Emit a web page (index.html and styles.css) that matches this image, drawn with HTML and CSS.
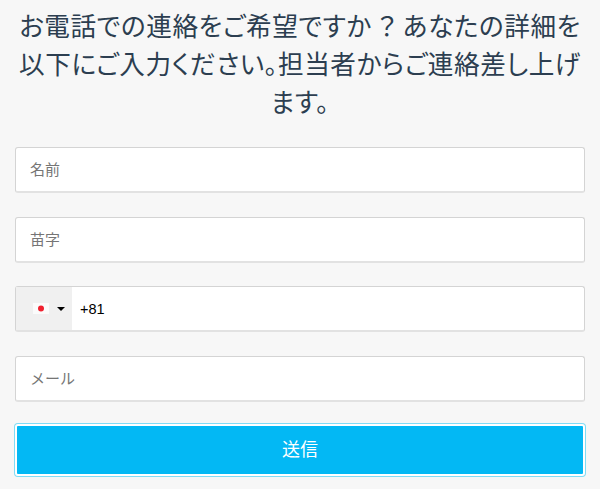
FILE: index.html
```html
<!doctype html>
<html lang="ja">
  <head>
    <meta charset="UTF-8" />
    <meta name="viewport" content="width=device-width, initial-scale=1.0" />
    <title>お電話での連絡</title>
    <link rel="stylesheet" href="styles.css">
  </head>
  <body>
    <main class="contact">
      <h2 class="title">お電話での連絡をご希望ですか<span class="question">？</span>あなたの詳細を<br>以下にご入力ください。担当者からご連絡差し上げます。</h2>

      <form class="form">
        <input class="field" type="text" placeholder="名前">
        <input class="field" type="text" placeholder="苗字">

        <div class="field phone">
          <div class="country">
            <svg class="flag" width="16" height="11" viewBox="0 0 16 11">
              <rect width="16" height="11" fill="#fbfbfb" />
              <circle cx="8" cy="5.5" r="3" fill="#f0212f" />
            </svg>
            <span class="caret"></span>
          </div>
          <input class="phone-input" type="tel" value="+81">
        </div>

        <input class="field" type="email" placeholder="メール">

        <button class="submit" type="button">送信</button>
      </form>
    </main>
  </body>
</html>
```

FILE: styles.css
```css
* {
  box-sizing: border-box;
}

body {
  margin: 0;
  height: 489px;
  overflow: hidden;
  background-color: #f7f7f7;
  font-family: "Liberation Sans", "Noto Sans CJK JP", sans-serif;
}

.contact {
  padding: 8px 15px 0;
}

.title {
  margin: 0 0 25px;
  font-size: 25.6px;
  font-feature-settings: "palt";
  letter-spacing: 0.6px;
  font-weight: 400;
  line-height: 38px;
  text-align: center;
  color: #2c3e50;
}

.question {
  padding: 0 6px;
}

.form {
  display: flex;
  flex-direction: column;
  gap: 23.5px;
}

.field {
  display: block;
  width: 100%;
  height: 46px;
  padding: 0 14px;
  background-color: #fff;
  border: 1px solid #d4d4d4;
  border-bottom: 2px solid #e2e2e2;
  border-radius: 3px;
  font-family: inherit;
  font-size: 15px;
  color: #000;
}

.field::placeholder {
  color: #757575;
  opacity: 1;
}

.phone {
  display: flex;
  padding: 0;
}

.country {
  display: flex;
  align-items: center;
  width: 56px;
  padding-left: 17px;
  background-color: #f0f0f0;
}

.caret {
  margin-left: 8px;
  border-top: 4px solid #000;
  border-left: 4px solid transparent;
  border-right: 4px solid transparent;
}

.phone-input {
  flex: 1;
  padding: 0 8px;
  border: 0;
  background: none;
  font-family: inherit;
  font-size: 14.5px;
  color: #000;
}

.submit {
  height: 52px;
  margin-top: -1px;
  padding-bottom: 5px;
  background-color: #03b8f4;
  border: 2px solid #fff;
  border-radius: 3px;
  box-shadow: 0 0 0 1px #7fdcf6;
  font-family: inherit;
  font-size: 18px;
  color: #fff;
}
```
